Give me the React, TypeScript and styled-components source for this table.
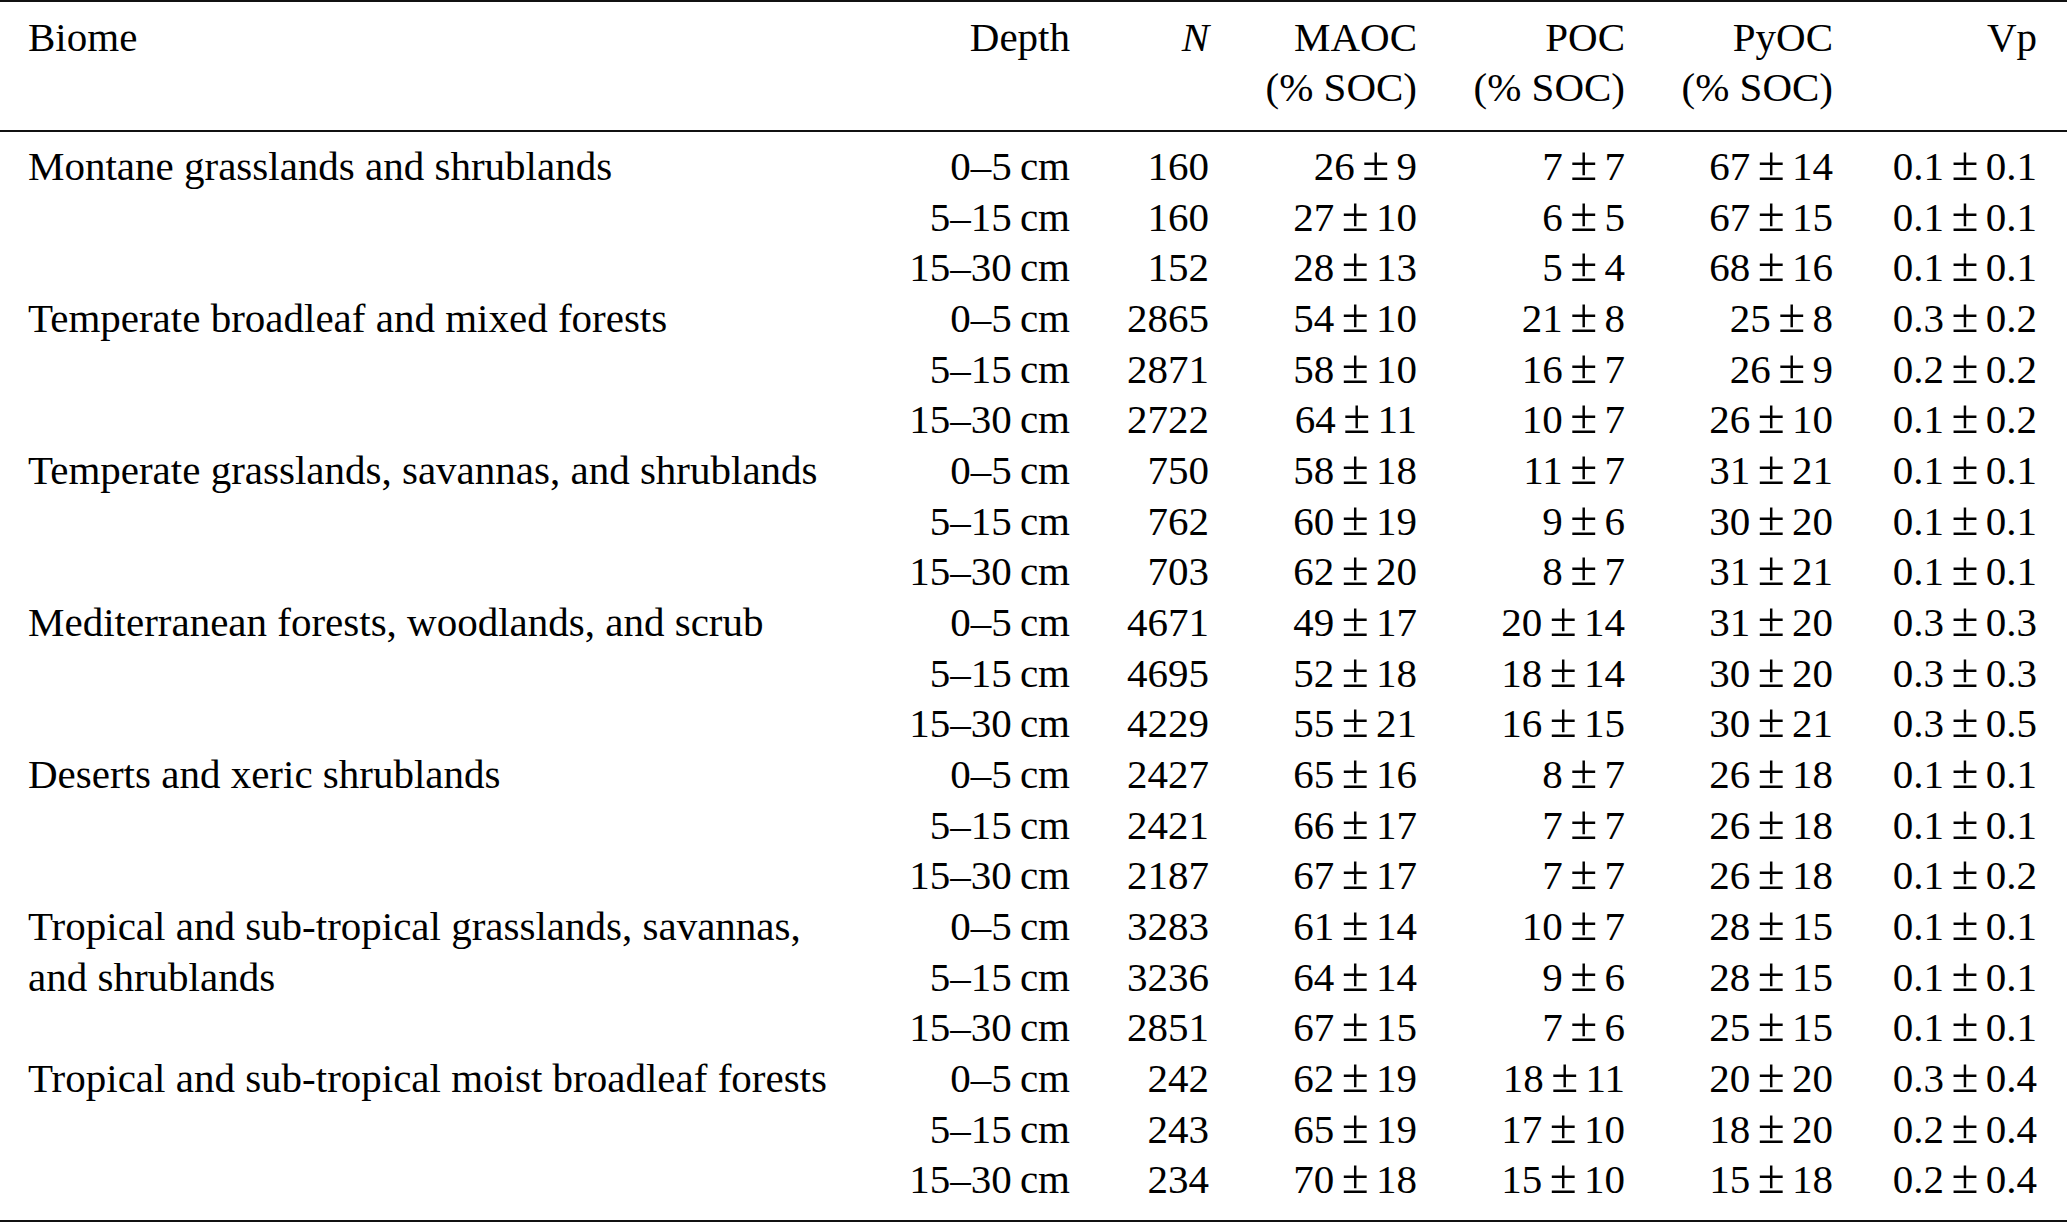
import React from "react";
import styled, { createGlobalStyle } from "styled-components";

type Stat = [string, string];
type Row = { depth: string; n: string; maoc: Stat; poc: Stat; pyoc: Stat; vp: Stat };
type Group = { biome: React.ReactNode; rows: Row[] };

const DEPTHS = ["0–5\u2009cm", "5–15\u2009cm", "15–30\u2009cm"];

const s = (a: string, b: string): Stat => [a, b];

const makeRows = (data: [string, Stat, Stat, Stat, Stat][]): Row[] =>
    data.map(([n, maoc, poc, pyoc, vp], i) => ({ depth: DEPTHS[i], n, maoc, poc, pyoc, vp }));

const GROUPS: Group[] = [
    {
        biome: "Montane grasslands and shrublands",
        rows: makeRows([
            ["160", s("26", "9"), s("7", "7"), s("67", "14"), s("0.1", "0.1")],
            ["160", s("27", "10"), s("6", "5"), s("67", "15"), s("0.1", "0.1")],
            ["152", s("28", "13"), s("5", "4"), s("68", "16"), s("0.1", "0.1")],
        ]),
    },
    {
        biome: "Temperate broadleaf and mixed forests",
        rows: makeRows([
            ["2865", s("54", "10"), s("21", "8"), s("25", "8"), s("0.3", "0.2")],
            ["2871", s("58", "10"), s("16", "7"), s("26", "9"), s("0.2", "0.2")],
            ["2722", s("64", "11"), s("10", "7"), s("26", "10"), s("0.1", "0.2")],
        ]),
    },
    {
        biome: "Temperate grasslands, savannas, and shrublands",
        rows: makeRows([
            ["750", s("58", "18"), s("11", "7"), s("31", "21"), s("0.1", "0.1")],
            ["762", s("60", "19"), s("9", "6"), s("30", "20"), s("0.1", "0.1")],
            ["703", s("62", "20"), s("8", "7"), s("31", "21"), s("0.1", "0.1")],
        ]),
    },
    {
        biome: "Mediterranean forests, woodlands, and scrub",
        rows: makeRows([
            ["4671", s("49", "17"), s("20", "14"), s("31", "20"), s("0.3", "0.3")],
            ["4695", s("52", "18"), s("18", "14"), s("30", "20"), s("0.3", "0.3")],
            ["4229", s("55", "21"), s("16", "15"), s("30", "21"), s("0.3", "0.5")],
        ]),
    },
    {
        biome: "Deserts and xeric shrublands",
        rows: makeRows([
            ["2427", s("65", "16"), s("8", "7"), s("26", "18"), s("0.1", "0.1")],
            ["2421", s("66", "17"), s("7", "7"), s("26", "18"), s("0.1", "0.1")],
            ["2187", s("67", "17"), s("7", "7"), s("26", "18"), s("0.1", "0.2")],
        ]),
    },
    {
        biome: (
            <>
                Tropical and sub-tropical grasslands, savannas,
                <br />
                and shrublands
            </>
        ),
        rows: makeRows([
            ["3283", s("61", "14"), s("10", "7"), s("28", "15"), s("0.1", "0.1")],
            ["3236", s("64", "14"), s("9", "6"), s("28", "15"), s("0.1", "0.1")],
            ["2851", s("67", "15"), s("7", "6"), s("25", "15"), s("0.1", "0.1")],
        ]),
    },
    {
        biome: "Tropical and sub-tropical moist broadleaf forests",
        rows: makeRows([
            ["242", s("62", "19"), s("18", "11"), s("20", "20"), s("0.3", "0.4")],
            ["243", s("65", "19"), s("17", "10"), s("18", "20"), s("0.2", "0.4")],
            ["234", s("70", "18"), s("15", "10"), s("15", "18"), s("0.2", "0.4")],
        ]),
    },
];

const StatValue: React.FC<{ value: Stat }> = ({ value }) => (
    <>
        {value[0]}
        <Pm>±</Pm>
        {value[1]}
    </>
);

export default function App() {
    return (
        <>
            <GlobalStyle />
            <Frame>
                <Table>
                    <colgroup>
                        <col style={{ width: 880 }} />
                        <col style={{ width: 190 }} />
                        <col style={{ width: 139 }} />
                        <col style={{ width: 208 }} />
                        <col style={{ width: 208 }} />
                        <col style={{ width: 208 }} />
                        <col style={{ width: 234 }} />
                    </colgroup>
                    <thead>
                        <tr>
                            <HeadCell $left>Biome</HeadCell>
                            <HeadCell>Depth</HeadCell>
                            <HeadCell>
                                <Italic>N</Italic>
                            </HeadCell>
                            <HeadCell>
                                MAOC
                                <br />
                                (% SOC)
                            </HeadCell>
                            <HeadCell>
                                POC
                                <br />
                                (% SOC)
                            </HeadCell>
                            <HeadCell>
                                PyOC
                                <br />
                                (% SOC)
                            </HeadCell>
                            <HeadCell $last>Vp</HeadCell>
                        </tr>
                    </thead>
                    <Body>
                        {GROUPS.map((group, gi) =>
                            group.rows.map((row, ri) => (
                                <tr key={`${gi}-${ri}`}>
                                    {ri === 0 && (
                                        <BiomeCell rowSpan={group.rows.length}>{group.biome}</BiomeCell>
                                    )}
                                    <Cell>{row.depth}</Cell>
                                    <Cell>{row.n}</Cell>
                                    <Cell>
                                        <StatValue value={row.maoc} />
                                    </Cell>
                                    <Cell>
                                        <StatValue value={row.poc} />
                                    </Cell>
                                    <Cell>
                                        <StatValue value={row.pyoc} />
                                    </Cell>
                                    <Cell $last>
                                        <StatValue value={row.vp} />
                                    </Cell>
                                </tr>
                            ))
                        )}
                    </Body>
                </Table>
            </Frame>
        </>
    );
}

const GlobalStyle = createGlobalStyle`
    html, body {
        margin: 0;
        padding: 0;
        background: #ffffff;
    }
    body {
        font-family: "Liberation Serif", "Times New Roman", serif;
        color: #000000;
    }
`;

const Frame = styled.div`
    width: 2067px;
    border-top: 2px solid #111111;
    border-bottom: 2px solid #111111;
`;

const Table = styled.table`
    width: 2067px;
    table-layout: fixed;
    border-collapse: separate;
    border-spacing: 0;
    font-size: 41px;
    line-height: 50.65px;
`;

const HeadCell = styled.th<{ $left?: boolean; $last?: boolean }>`
    font-weight: normal;
    vertical-align: top;
    text-align: ${p => (p.$left ? "left" : "right")};
    white-space: nowrap;
    padding: 9.5px ${p => (p.$last ? "30px" : "0")} 16.8px ${p => (p.$left ? "28px" : "0")};
    border-bottom: 2px solid #111111;
`;

const Body = styled.tbody`
    tr:first-child td {
        padding-top: 9.5px;
    }
    tr:last-child td {
        padding-bottom: 14.8px;
    }
`;

const Cell = styled.td<{ $last?: boolean }>`
    text-align: right;
    white-space: nowrap;
    vertical-align: top;
    padding: 0 ${p => (p.$last ? "30px" : "0")} 0 0;
`;

const BiomeCell = styled.td`
    text-align: left;
    vertical-align: top;
    white-space: nowrap;
    padding: 0 0 0 28px;
`;

const Pm = styled.span`
    font-size: 1.2em;
    line-height: 0;
    margin: 0 0.15em;
`;

const Italic = styled.span`
    font-style: italic;
`;
